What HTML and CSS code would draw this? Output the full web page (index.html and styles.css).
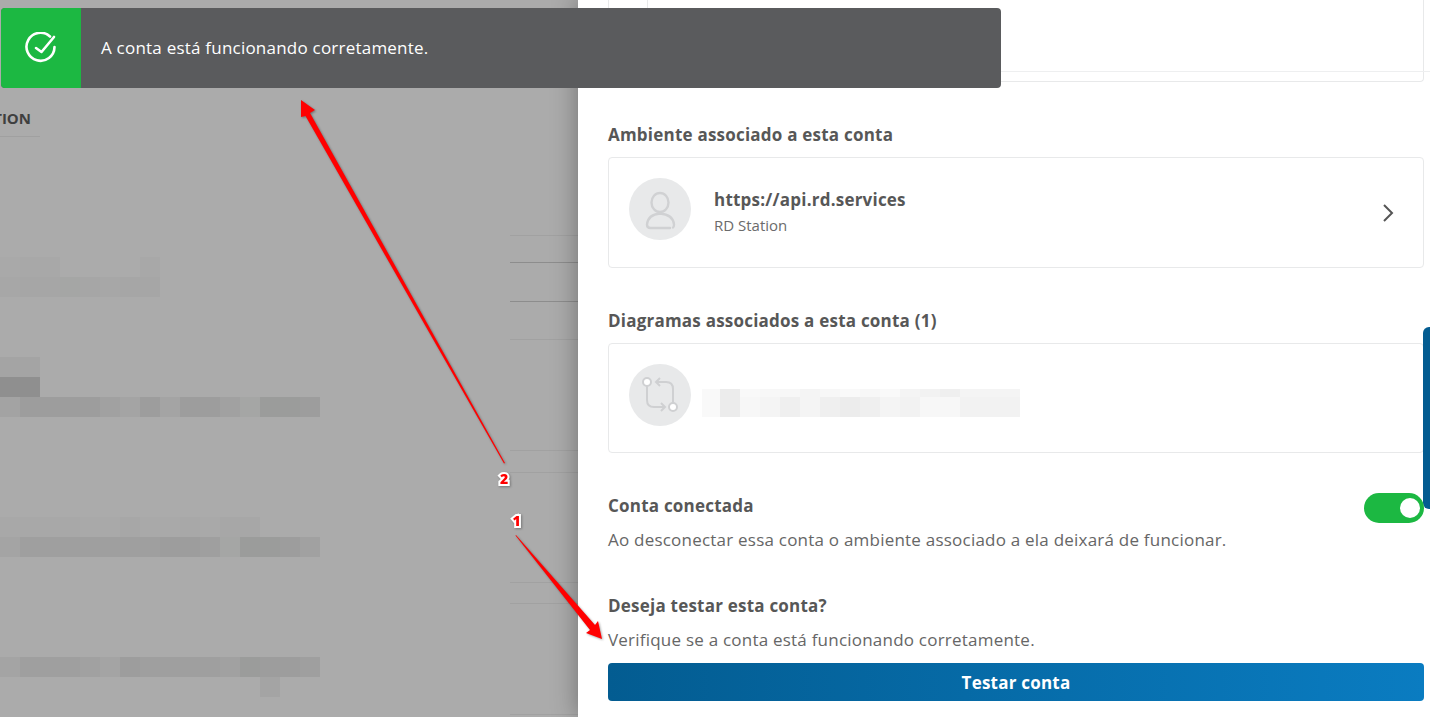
FILE: index.html
```html
<!DOCTYPE html>
<html lang="pt-BR">
<head>
    <meta charset="UTF-8">
    <meta name="viewport" content="width=device-width, initial-scale=1.0">
    <title>Conta</title>
    <link rel="stylesheet" href="styles.css">
</head>
<body>
    <div class="page">
        <!-- Dimmed page behind the drawer -->
        <div class="backdrop">
            <div class="blur-col">
                <div class="crumb"><span class="crumb-text">TION</span></div>
                <div class="mosaic-row gap-120"><i class="a9"></i><i class="a7"></i><i class="a7"></i><i></i><i></i><i></i><i></i><i class="a7"></i></div>
                <div class="mosaic-row"><i class="a6"></i><i class="a5"></i><i class="a5"></i><i class="a4"></i><i class="a5"></i><i class="a6"></i><i class="a5"></i><i class="a5"></i></div>
                <div class="mosaic-row gap-60"><i class="a3"></i><i class="a3"></i></div>
                <div class="mosaic-row"><i class="n8f"></i><i class="n8f"></i></div>
                <div class="mosaic-row"><i class="a2"></i><i class="n9c"></i><i class="n9c"></i><i class="n9c"></i><i class="n9c"></i><i class="a0"></i><i class="a3"></i><i class="n9c"></i><i class="a3"></i><i class="n9c"></i><i class="n9c"></i><i class="a0"></i><i class="a4"></i><i class="n9a"></i><i class="n9a"></i><i class="n9c"></i></div>
                <div class="mosaic-row gap-100"><i class="a7"></i><i class="a7"></i><i class="a7"></i><i class="a7"></i><i class="a9"></i><i class="a9"></i><i class="a6"></i><i class="a9"></i><i class="a9"></i><i class="a7"></i><i class="a9"></i><i class="a6"></i><i class="a6"></i></div>
                <div class="mosaic-row"><i class="a3"></i><i class="n9e"></i><i class="n9e"></i><i class="n9e"></i><i class="n9e"></i><i class="n9e"></i><i class="n9e"></i><i class="n9e"></i><i class="n9c"></i><i class="n9c"></i><i class="n9e"></i><i class="a4"></i><i class="n9a"></i><i class="n9a"></i><i class="n9c"></i><i class="a0"></i></div>
                <div class="mosaic-row gap-100"><i class="a3"></i><i class="n9e"></i><i class="n9e"></i><i class="n9e"></i><i class="a0"></i><i class="a3"></i><i class="n9c"></i><i class="n9e"></i><i class="n9e"></i><i class="n9e"></i><i class="n9e"></i><i class="a0"></i><i class="n9a"></i><i class="n9c"></i><i class="n9c"></i><i class="n9e"></i></div>
                <div class="mosaic-row"><i></i><i></i><i></i><i></i><i></i><i></i><i></i><i></i><i></i><i></i><i></i><i></i><i></i><i class="a3"></i></div>
            </div>
            <div class="rule-col">
                <div class="rule"></div>
                <div class="rule dark"></div>
                <div class="rule dark"></div>
                <div class="rule"></div>
                <div class="rule"></div>
                <div class="rule"></div>
                <div class="rule"></div>
                <div class="rule"></div>
                <div class="rule"></div>
            </div>
        </div>

        <!-- Drawer -->
        <div class="panel">
            <div class="top-card">
                <div class="top-tabs"><div class="tab-first"></div></div>
            </div>

            <h2 class="section-title">Ambiente associado a esta conta</h2>
            <div class="card card-tall">
                <div class="avatar">
                    <svg width="62" height="62" viewBox="0 0 62 62" fill="none" stroke="#d0d1d3" stroke-width="2.4" stroke-linecap="round">
                        <ellipse cx="31" cy="24.5" rx="8.5" ry="9.5"/>
                        <path d="M41 50H21.5Q18 50 18 46.5Q19 36.500 31 35.500Q44 36.500 45 46.500Q45 49 44 49.500"/>
                    </svg>
                </div>
                <div class="card-text">
                    <div class="card-name">https://api.rd.services</div>
                    <div class="card-sub">RD Station</div>
                </div>
                <svg class="chevron" width="12" height="20" viewBox="0 0 12 20" fill="none" stroke="#555" stroke-width="2">
                    <path d="M2 2l8 8-8 8"/>
                </svg>
            </div>

            <h2 class="section-title">Diagramas associados a esta conta (1)</h2>
            <div class="card">
                <div class="avatar">
                    <svg width="62" height="62" viewBox="0 0 62 62" fill="none" stroke="#cfd0d2" stroke-width="2">
                        <path d="M18 22V36Q18 43 25 43H36M32 39l4 4-4 4"/>
                        <path d="M44 39V25Q44 18 37 18H27M31 14l-4 4 4 4"/>
                        <circle cx="18" cy="18" r="4" fill="#fff"/>
                        <circle cx="44" cy="43" r="4" fill="#fff"/>
                    </svg>
                </div>
                <div class="name-blur">
                    <div class="blur-line thin"><i class="f9"></i><i class="ec"></i><i class="f9"></i><i class="f7"></i><i class="f7"></i><i class="f4"></i><i class="f7"></i><i class="f9"></i><i class="f7"></i><i class="f9"></i><i class="f4"></i><i class="f2"></i><i class="ef"></i><i class="f4"></i><i class="f4"></i><i class="f4"></i></div>
                    <div class="blur-line"><i class="f9"></i><i class="ec"></i><i class="f7"></i><i class="f4"></i><i class="ef"></i><i class="f4"></i><i class="ef"></i><i class="ec"></i><i class="ef"></i><i class="f4"></i><i class="f2"></i><i class="f7"></i><i class="f7"></i><i class="f2"></i><i class="f2"></i><i class="f2"></i></div>
                </div>
            </div>

            <div class="switch-row">
                <h2 class="section-title flat">Conta conectada</h2>
                <div class="switch"><span class="switch-knob"></span></div>
            </div>
            <p class="hint">Ao desconectar essa conta o ambiente associado a ela deixará de funcionar.</p>

            <h2 class="section-title test-title">Deseja testar esta conta?</h2>
            <p class="hint test-hint">Verifique se a conta está funcionando corretamente.</p>
            <button class="test-button">Testar conta</button>
        </div>

        <!-- Side tab on top of the drawer -->
        <div class="side-tab"></div>

        <!-- Success toast -->
        <div class="toast">
            <div class="toast-icon">
                <svg width="32" height="32" viewBox="0 0 32 32" fill="none" stroke="#fff" stroke-width="2.6" stroke-linecap="round" stroke-linejoin="round">
                    <path d="M25 4.500A14 14 0 1 0 29.500 15"/>
                    <path d="M11 16l5.500 4L29 5"/>
                </svg>
            </div>
            <div class="toast-text">A conta está funcionando corretamente.</div>
        </div>

        <!-- Annotation arrows drawn over the screenshot -->
        <svg class="marks" width="1430" height="717" viewBox="0 0 1430 717">
            <polygon class="mark-arrow" points="505,463 310,113 315,110 301,100 301,117 305.500,116 504,463.500"/>
            <polygon class="mark-arrow" points="516,535 595,625 598,621 602,639 586,633 590,630 515.500,535.500"/>
            <text x="504" y="484" class="mark-num">2</text>
            <text x="516.500" y="526" class="mark-num">1</text>
        </svg>
    </div>
</body>
</html>
```

FILE: styles.css
```css
body {
    margin: 0;
    font-family: "Open Sans", Arial, sans-serif;
    background: #fff;
    overflow: hidden;
}

.page {
    position: relative;
    display: flex;
    width: 1430px;
    height: 717px;
    overflow: hidden;
}

/* Backdrop */
.backdrop {
    display: flex;
    flex: 0 0 578px;
    background: #ababab;
}

.blur-col {
    width: 510px;
    display: flex;
    flex-direction: column;
}

.crumb {
    width: 40px;
    height: 137px;
    box-sizing: border-box;
    padding-top: 107px;
    border-bottom: 1px solid #a0a0a0;
    overflow: hidden;
    display: flex;
    justify-content: flex-end;
}

.crumb-text {
    font-size: 15px;
    font-weight: 700;
    line-height: 22px;
    color: #3f3f3f;
    padding-right: 9px;
    white-space: nowrap;
}

.mosaic-row {
    display: flex;
    height: 20px;
}

.gap-60 { margin-top: 60px; }
.gap-100 { margin-top: 100px; }
.gap-120 { margin-top: 120px; }

.mosaic-row i {
    width: 20px;
    height: 20px;
    background: #ababab;
}

.mosaic-row i.a9 { background: #a9a9a9; }
.mosaic-row i.a7 { background: #a8a8a8; }
.mosaic-row i.a6 { background: #a7a7a7; }
.mosaic-row i.a5 { background: #a6a6a6; }
.mosaic-row i.a4 { background: #a5a6a5; }
.mosaic-row i.a3 { background: #a4a4a4; }
.mosaic-row i.a2 { background: #a3a3a3; }
.mosaic-row i.a0 { background: #a1a1a1; }
.mosaic-row i.n9e { background: #9f9f9f; }
.mosaic-row i.n9c { background: #9d9d9d; }
.mosaic-row i.n9a { background: #9b9c9b; }
.mosaic-row i.n8f { background: #8f8f8f; }

.rule-col {
    flex: 1;
    display: grid;
    grid-template-rows: 236px 27px 39px 38px 111px 22px 110px 21px 111px;
    align-content: start;
}

.rule {
    border-bottom: 1px solid #a1a1a1;
}

.rule.dark {
    border-bottom-color: #8d8d8d;
}

/* Drawer */
.panel {
    flex: 1;
    position: relative;
    padding: 0 6px 0 30px;
    background: #fff;
    box-shadow: 0 0 24px rgba(0, 0, 0, 0.35);
    color: #555;
}

.top-card {
    height: 82px;
    box-sizing: border-box;
    border: 1px solid #e8e9ea;
    border-top: none;
    border-radius: 0 0 4px 4px;
}

.top-tabs {
    height: 72px;
    margin-right: -7px;
    box-sizing: border-box;
    border-bottom: 1px solid #eeeff0;
}

.tab-first {
    width: 38px;
    height: 71px;
    border-right: 1px solid #e8e9ea;
}

.section-title {
    margin: 41px 0 10px;
    font-size: 17px;
    font-weight: 700;
    letter-spacing: 0.22px;
    line-height: 24px;
    color: #575757;
}

.section-title.flat {
    margin: 1px 0 0;
}

.card {
    display: flex;
    align-items: flex-start;
    height: 110px;
    box-sizing: border-box;
    padding: 20px 29px 0 20px;
    border: 1px solid #e8e9ea;
    border-radius: 4px;
}

.card-tall {
    height: 111px;
}

.avatar {
    flex: 0 0 62px;
    height: 62px;
    border-radius: 50%;
    background: #e8e9ea;
}

.avatar svg {
    display: block;
}

.card-text {
    flex: 1;
    margin: 9px 0 0 23px;
}

.card-name {
    font-size: 17px;
    font-weight: 700;
    letter-spacing: 0.22px;
    line-height: 26px;
    color: #575757;
}

.card-sub {
    margin-top: 1px;
    font-size: 15px;
    line-height: 22px;
    color: #6b6b6b;
}

.chevron {
    display: block;
    margin-top: 25px;
}

.name-blur {
    margin: 25px 0 0 11px;
}

.blur-line {
    display: flex;
    height: 20px;
}

.blur-line.thin {
    height: 8px;
}

.blur-line i {
    width: 20px;
    background: #f4f4f4;
}

.blur-line i:first-child {
    width: 18px;
}

.blur-line i.f9 { background: #f9f9f9; }
.blur-line i.f7 { background: #f7f7f7; }
.blur-line i.f4 { background: #f4f4f4; }
.blur-line i.f2 { background: #f2f2f2; }
.blur-line i.ef { background: #efefef; }
.blur-line i.ec { background: #ececec; }

.switch-row {
    display: flex;
    align-items: flex-start;
    justify-content: space-between;
    height: 30px;
    margin-top: 40px;
}

.switch {
    display: flex;
    align-items: center;
    justify-content: flex-end;
    position: relative;
    z-index: 2;
    width: 60px;
    height: 30px;
    box-sizing: border-box;
    padding-right: 4px;
    border-radius: 15px;
    background: #1cb842;
}

.switch-knob {
    width: 20px;
    height: 20px;
    border-radius: 50%;
    background: #fff;
}

.hint {
    margin: 5px 0 0;
    font-size: 17px;
    letter-spacing: 0.22px;
    line-height: 24px;
    color: #666;
}

.test-title {
    margin: 42px 0 0;
}

.test-hint {
    margin-top: 10px;
}

.test-button {
    display: block;
    width: 100%;
    height: 38px;
    margin-top: 11px;
    border: none;
    border-radius: 4px;
    background: linear-gradient(90deg, #035c91, #0a7cc1);
    color: #fff;
    font-family: inherit;
    font-size: 17px;
    font-weight: 700;
    letter-spacing: 0.22px;
    cursor: pointer;
}

/* Overlays */
.side-tab {
    position: absolute;
    top: 327px;
    left: 1423px;
    width: 7px;
    height: 182px;
    border-radius: 6px 0 0 6px;
    background: #035c91;
}

.toast {
    position: absolute;
    top: 8px;
    left: 1px;
    display: flex;
    align-items: center;
    width: 1000px;
    height: 80px;
    border-radius: 4px;
    background: #5a5b5d;
    overflow: hidden;
}

.toast-icon {
    display: flex;
    align-items: center;
    justify-content: center;
    flex: 0 0 80px;
    height: 80px;
    background: #1cb842;
}

.toast-text {
    margin-left: 20px;
    font-size: 17px;
    letter-spacing: 0.22px;
    line-height: 24px;
    color: #fff;
}

.marks {
    position: absolute;
    top: 0;
    left: 0;
    pointer-events: none;
}

.mark-arrow {
    fill: #f00;
    filter: drop-shadow(1px 1px 1px rgba(0, 0, 0, 0.35));
}

.mark-num {
    font-family: "Open Sans", Arial, sans-serif;
    font-size: 14px;
    font-weight: 800;
    text-anchor: middle;
    fill: #f00;
    stroke: #fff;
    stroke-width: 4px;
    paint-order: stroke;
    filter: drop-shadow(1px 1px 1px rgba(0, 0, 0, 0.3));
}
```
